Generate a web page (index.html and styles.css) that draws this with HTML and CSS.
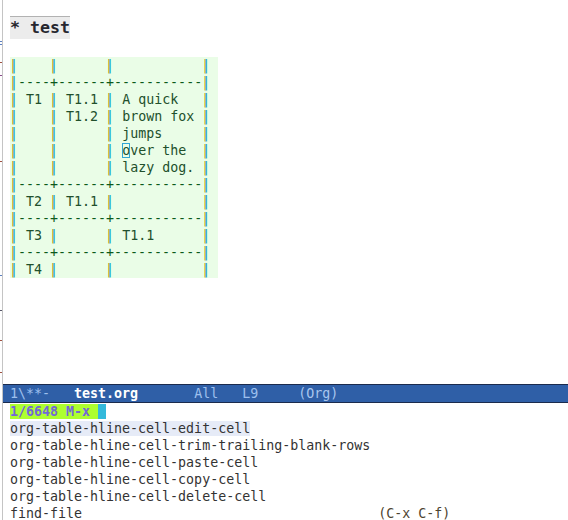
FILE: index.html
```html
<!DOCTYPE html>
<html>
<head>
<meta charset="utf-8">
<link rel="stylesheet" href="styles.css">
</head>
<body>
<div class="frame">
  <div class="edge">
    <i class="tick tk-blue tk1"></i>
    <i class="tick tk-blue tk2"></i>
    <i class="tick tk-red tk3"></i>
    <i class="tick tk-purple tk4"></i>
    <i class="tick tk-red tk5"></i>
    <i class="tick tk-blue tk6"></i>
    <i class="tick tk-dark tk7"></i>
    <i class="tick tk-red tk8"></i>
    <i class="tick tk-red tk9"></i>
  </div>
  <div class="main">
    <div class="buffer">
      <div class="heading">* test</div>
      <div class="table">
<div class="tl"><span class="b">|</span>    <span class="b">|</span>      <span class="b">|</span>           <span class="b">|</span> </div>
<div class="tl"><span class="b">|</span><span class="h">----+------+-----------</span><span class="b">|</span> </div>
<div class="tl"><span class="b">|</span> T1 <span class="b">|</span> T1.1 <span class="b">|</span> A quick   <span class="b">|</span> </div>
<div class="tl"><span class="b">|</span>    <span class="b">|</span> T1.2 <span class="b">|</span> brown fox <span class="b">|</span> </div>
<div class="tl"><span class="b">|</span>    <span class="b">|</span>      <span class="b">|</span> jumps     <span class="b">|</span> </div>
<div class="tl"><span class="b">|</span>    <span class="b">|</span>      <span class="b">|</span> <span class="cursor">o</span>ver the  <span class="b">|</span> </div>
<div class="tl"><span class="b">|</span>    <span class="b">|</span>      <span class="b">|</span> lazy dog. <span class="b">|</span> </div>
<div class="tl"><span class="b">|</span><span class="h">----+------+-----------</span><span class="b">|</span> </div>
<div class="tl"><span class="b">|</span> T2 <span class="b">|</span> T1.1 <span class="b">|</span>           <span class="b">|</span> </div>
<div class="tl"><span class="b">|</span><span class="h">----+------+-----------</span><span class="b">|</span> </div>
<div class="tl"><span class="b">|</span> T3 <span class="b">|</span>      <span class="b">|</span> T1.1      <span class="b">|</span> </div>
<div class="tl"><span class="b">|</span><span class="h">----+------+-----------</span><span class="b">|</span> </div>
<div class="tl"><span class="b">|</span> T4 <span class="b">|</span>      <span class="b">|</span>           <span class="b">|</span> </div>
      </div>
    </div>
    <div class="modeline"><span class="ml-dim">1\**-   </span><span class="ml-buf">test.org</span><span class="ml-dim">       All   L9     </span><span class="ml-mode">(Org)</span></div>
    <div class="minibuf">
      <div class="mline"><span class="prompt">1/6648 M-x </span><span class="mcursor"> </span></div>
      <div class="mline"><span class="current">org-table-hline-cell-edit-cell</span></div>
      <div class="mline">org-table-hline-cell-trim-trailing-blank-rows</div>
      <div class="mline">org-table-hline-cell-paste-cell</div>
      <div class="mline">org-table-hline-cell-copy-cell</div>
      <div class="mline">org-table-hline-cell-delete-cell</div>
      <div class="mline">find-file                                     <span class="key">(C-x C-f)</span></div>
    </div>
  </div>
</div>
</body>
</html>
```
FILE: styles.css
```css
html, body {
  margin: 0;
  padding: 0;
  background: #ffffff;
}

body {
  width: 568px;
  height: 520px;
  overflow: hidden;
  font-family: "DejaVu Sans Mono", "Liberation Mono", monospace;
  font-size: 13.3px;
  line-height: 17px;
  color: #333333;
}

.frame {
  display: flex;
  height: 520px;
}

.edge {
  position: relative;
  width: 2px;
  flex: none;
  border-right: 1px solid #c4c4c4;
}

.tick {
  position: absolute;
  left: 0;
  width: 2px;
  height: 1px;
}
.tk-blue { background: #5b7fc0; }
.tk-red { background: #a05040; }
.tk-purple { background: #8a4a8a; }
.tk-dark { background: #555566; }
.tk1 { top: 41px; }
.tk2 { top: 44px; }
.tk3 { top: 62px; }
.tk4 { top: 75px; }
.tk5 { top: 161px; }
.tk6 { top: 275px; }
.tk7 { top: 310px; }
.tk8 { top: 340px; }
.tk9 { top: 372px; }

.main {
  flex: 1;
  display: flex;
  flex-direction: column;
  min-width: 0;
}

.buffer {
  height: 384px;
  flex: none;
  box-sizing: border-box;
  padding: 16px 0 0 7px;
}

.heading {
  width: fit-content;
  border-top: 1px solid #b2b2b2;
  background: #ececec;
  color: #26262e;
  font-weight: bold;
  font-size: 16.6px;
  line-height: 22px;
  white-space: pre;
  margin-bottom: 18px;
}

.table {
  width: 208px;
  background: #eafde7;
  color: #21502c;
}

.tl {
  white-space: pre;
  height: 17px;
}

.b {
  color: #14a8c8;
  text-shadow: -1px 0 0 #b59c00;
}

.h {
  color: #0d5a1c;
}

.cursor {
  outline: 1px solid #2fa6d6;
  outline-offset: -1px;
}

.modeline {
  flex: none;
  height: 17px;
  border-top: 1px solid #1b2b4d;
  border-bottom: 1px solid #1b2b4d;
  background: #2f5fa7;
  color: #9ec0ee;
  padding-left: 7px;
  white-space: pre;
}

.ml-buf {
  color: #ffffff;
  font-weight: bold;
}

.ml-mode {
  color: #a9c6ee;
}

.minibuf {
  padding-left: 7px;
}

.mline {
  white-space: pre;
  height: 17px;
  color: #333333;
}

.prompt {
  background: #adff2f;
  color: #7468d8;
  font-weight: bold;
}

.mcursor {
  background: #33b9db;
}

.current {
  background: #e6ebf7;
}

.key {
  color: #4d4330;
}
```
